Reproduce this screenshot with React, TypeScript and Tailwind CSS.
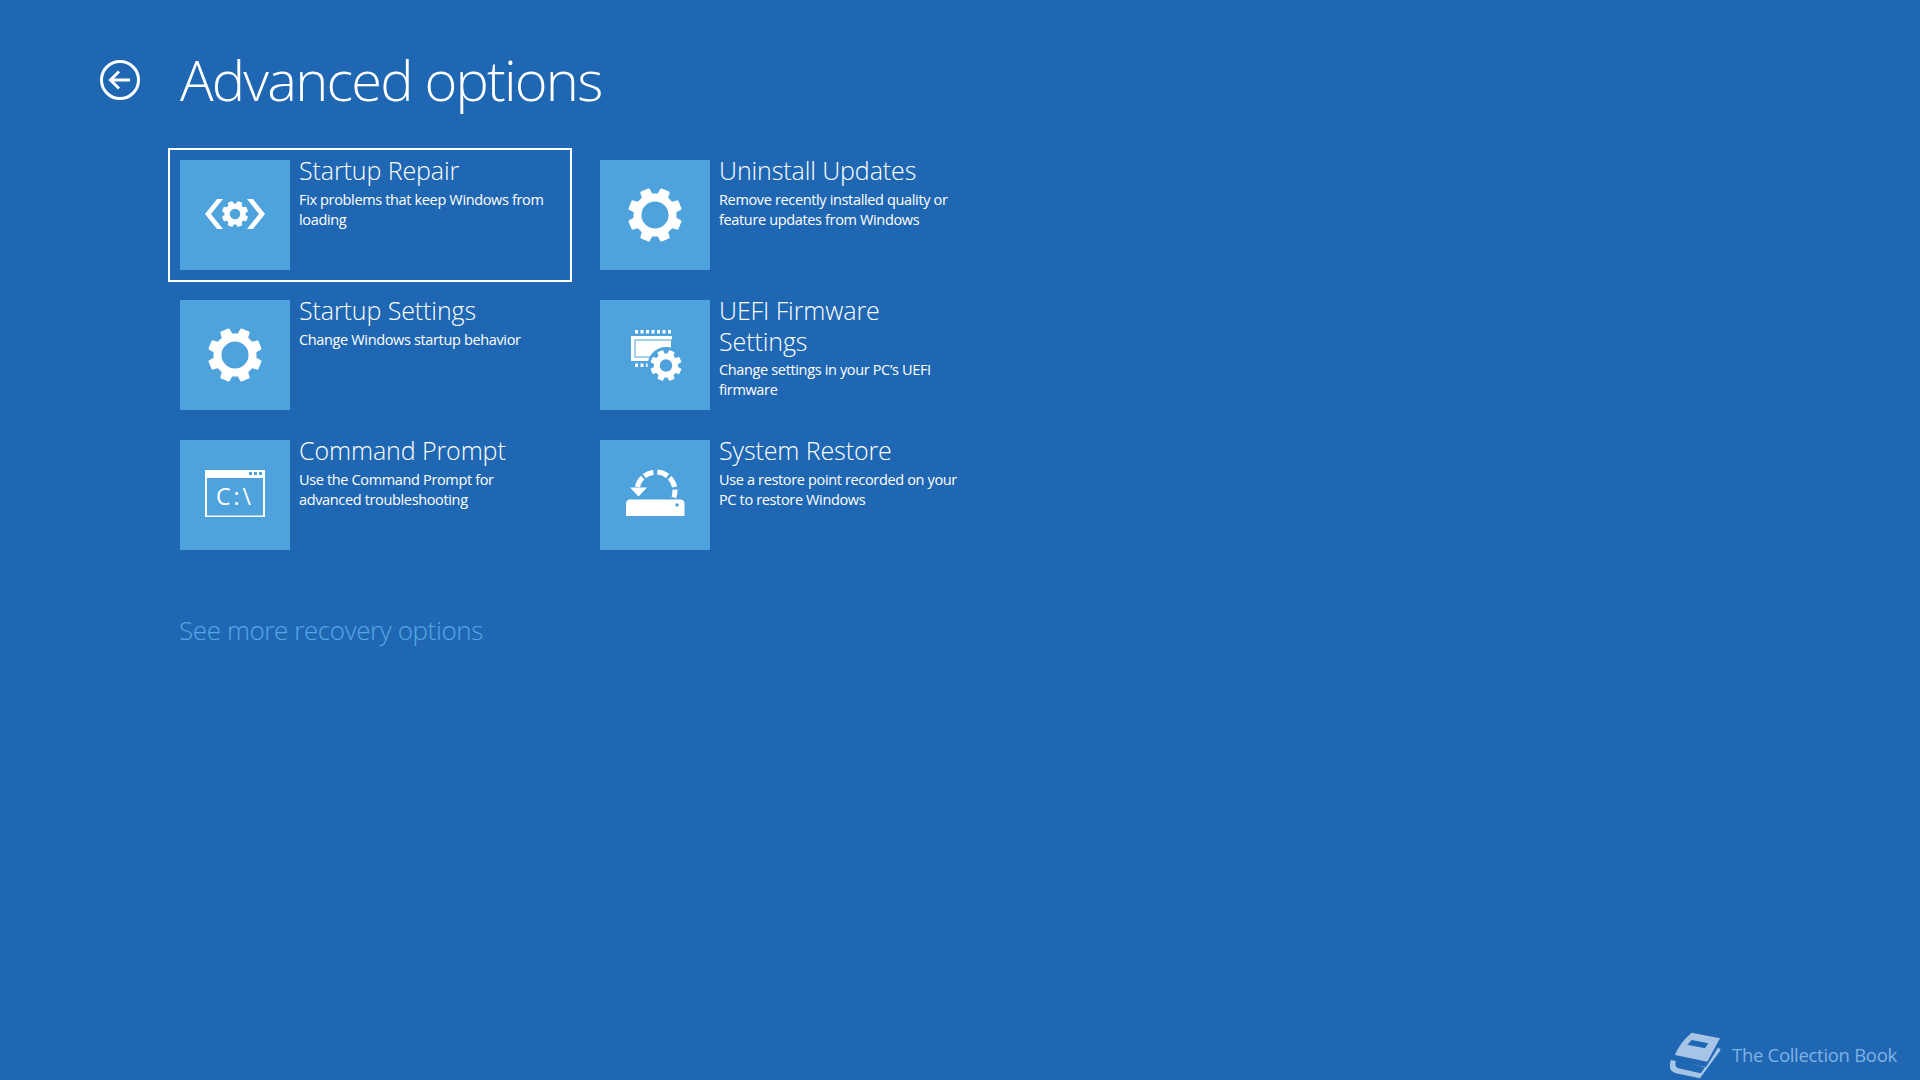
import type { ReactNode } from 'react'

// builds an n-tooth gear outline, centred on cx/cy
function gearPath(cx: number, cy: number, outer: number, root: number, hole: number, teeth = 8, start = 0) {
  const step = (Math.PI * 2) / teeth
  const pts: string[] = []
  for (let i = 0; i < teeth; i++) {
    const a = start + i * step
    const p = (r: number, t: number) => `${(cx + r * Math.cos(a + t)).toFixed(2)} ${(cy + r * Math.sin(a + t)).toFixed(2)}`
    pts.push(`${i === 0 ? 'M' : 'L'}${p(root, -step * 0.28)}`)
    pts.push(`L${p(outer, -step * 0.19)}`)
    pts.push(`L${p(outer, step * 0.19)}`)
    pts.push(`L${p(root, step * 0.28)}`)
  }
  pts.push('Z')
  return pts.join('') + `M${cx - hole} ${cy}a${hole} ${hole} 0 1 0 ${hole * 2} 0a${hole} ${hole} 0 1 0 ${-hole * 2} 0Z`
}

// degrees run clockwise from twelve o'clock
function arc(a0: number, a1: number) {
  const pt = (a: number) => {
    const r = (a * Math.PI) / 180
    return `${(56 + 19 * Math.sin(r)).toFixed(2)} ${(51 - 19 * Math.cos(r)).toFixed(2)}`
  }
  return `M${pt(a0)}A19 19 0 0 1 ${pt(a1)}`
}

function RepairIcon() {
  return (
    <svg viewBox="0 0 110 110" className="w-full h-full" fill="#fff">
      <path d={gearPath(55, 54, 12.500, 10, 6, 8, Math.PI / 8)} fillRule="evenodd" stroke="#fff" strokeWidth="1.500" strokeLinejoin="round" />
      <path d="M37 39h6L31 54l12 15h-6L25 54Z" />
      <path d="M73 39h-6l12 15-12 15h6L85 54Z" />
    </svg>
  )
}

function GearIcon() {
  return (
    <svg viewBox="0 0 110 110" className="w-full h-full" fill="#fff">
      <path d={gearPath(55, 55, 26, 20.500, 14.800, 8, Math.PI / 8)} fillRule="evenodd" stroke="#fff" strokeWidth="2.500" strokeLinejoin="round" />
    </svg>
  )
}

function FirmwareIcon() {
  const top = [35, 40.500, 46, 51.500, 57, 62.500, 68]
  return (
    <svg viewBox="0 0 110 110" className="w-full h-full" fill="#fff">
      {top.map((x) => (
        <rect key={x} x={x} y="30" width="3" height="3.500" />
      ))}
      {top.slice(0, 3).map((x) => (
        <rect key={x} x={x} y="63.500" width="3" height="3.500" />
      ))}
      <rect x="31" y="36" width="41" height="25" />
      <rect x="35" y="40" width="36.500" height="17" fill="none" stroke="#4fa3dc" strokeWidth="1" />
      <circle cx="66" cy="65.500" r="18.500" fill="#4fa3dc" />
      <path d={gearPath(66, 65.500, 15, 11.500, 7, 8, Math.PI / 8)} fillRule="evenodd" stroke="#fff" strokeWidth="1.500" strokeLinejoin="round" />
    </svg>
  )
}

function CommandIcon() {
  return (
    <svg viewBox="0 0 110 110" className="w-full h-full">
      <rect x="25" y="30" width="60" height="47" fill="#fff" />
      <rect x="27" y="38" width="56" height="37.500" fill="#4fa3dc" />
      <rect x="69" y="32" width="3" height="3" fill="#4fa3dc" />
      <rect x="74" y="32" width="3" height="3" fill="#4fa3dc" />
      <rect x="79" y="32" width="3" height="3" fill="#4fa3dc" />
    </svg>
  )
}

function RestoreIcon() {
  return (
    <svg viewBox="0 0 110 110" className="w-full h-full" fill="#fff">
      <path d="M29 59.500h52a4 4 0 0 1 3.500 4V76H26V63a4 4 0 0 1 3-3.500Z" />
      <circle cx="77" cy="65" r="1.800" fill="#4fa3dc" />
      <path d="M30 47.500h17L38.500 56.500Z" />
      <g fill="none" stroke="#fff" strokeWidth="5">
        <path d={arc(-78, -45)} />
        <path d={arc(-38, -8)} />
        <path d={arc(4, 38)} />
        <path d={arc(46, 78)} />
        <path d={arc(86, 110)} />
      </g>
    </svg>
  )
}

function BookIcon() {
  return (
    <svg viewBox="0 0 51 47" className="w-[51px] h-[47px]" fill="#a6c5e6">
      <path d="M21.700.7 50 6.300 37.300 29.700 5 23C8 15 14 7 21.700.7Z" />
      <path d="M48.300 15.300 50.700 18 30 46.300 5 41C1 39-.5 37 0 34.700c0-3 .3-5 .7-6.700L36 35Z" />
      <path d="M6.700 28 35 35.300 30.700 41.300 8.300 36.300C5 35 4.500 31 6.700 28Z" fill="#1f67b3" />
      <path d="M21.700 8 38.300 11.300 35 16.300 17.300 12.700Z" fill="#1f67b3" />
    </svg>
  )
}

type Option = {
  title: string
  text: string
  icon: ReactNode
  focused?: boolean
  tileLabel?: string
}

const options: Option[] = [
  { title: 'Startup Repair', text: 'Fix problems that keep Windows from loading', icon: <RepairIcon />, focused: true },
  { title: 'Uninstall Updates', text: 'Remove recently installed quality or feature updates from Windows', icon: <GearIcon /> },
  { title: 'Startup Settings', text: 'Change Windows startup behavior', icon: <GearIcon /> },
  { title: 'UEFI Firmware Settings', text: 'Change settings in your PC’s UEFI firmware', icon: <FirmwareIcon /> },
  { title: 'Command Prompt', text: 'Use the Command Prompt for advanced troubleshooting', icon: <CommandIcon />, tileLabel: 'C:\\' },
  { title: 'System Restore', text: 'Use a restore point recorded on your PC to restore Windows', icon: <RestoreIcon /> },
]

function OptionCard({ option }: { option: Option }) {
  return (
    <div className="relative flex gap-[9px] h-[110px]">
      {option.focused && (
        <div className="absolute -left-3 -top-3 w-[404px] h-[134px] border-2 border-white" />
      )}
      <div className="relative w-[110px] h-[110px] shrink-0 bg-[#4fa3dc]">
        {option.icon}
        {option.tileLabel && (
          <span className="absolute inset-0 flex items-center justify-center pt-[2px] text-[23px] leading-none text-white tracking-[3px] font-['Open_Sans',sans-serif]">
            {option.tileLabel}
          </span>
        )}
      </div>
      <div className="w-[250px] text-white">
        <h2 className="w-[240px] text-[25px] leading-[30.500px] font-light tracking-[-0.1px] -mt-[5px]">{option.title}</h2>
        <p className="text-[14.500px] leading-[20px] tracking-[-0.35px] mt-[4px]">{option.text}</p>
      </div>
    </div>
  )
}

export default function App() {
  return (
    <div className="relative w-[1920px] h-[1080px] overflow-hidden bg-[#1f67b3] font-['Open_Sans',sans-serif]">
      <header className="flex items-center h-[80px] mt-[40px] pl-[99px]">
        <svg viewBox="0 0 42 42" className="w-[42px] h-[42px]" fill="none" stroke="#fff" strokeWidth="3">
          <circle cx="21" cy="21" r="18.500" />
          <path d="M31 21H12M20 12.500 11.500 21l8.500 8.500" />
        </svg>
        <h1 className="ml-[39px] -mt-[2px] text-[56px] leading-[80px] font-light text-white tracking-[-1.800px]">Advanced options</h1>
      </header>

      <div className="grid grid-cols-[420px_420px] gap-y-[30px] ml-[180px] mt-[40px]">
        {options.map((option) => (
          <OptionCard key={option.title} option={option} />
        ))}
      </div>

      <p className="ml-[179px] mt-[62px] text-[26px] leading-[36px] font-light text-[#56a8e2] tracking-[-0.4px]">See more recovery options</p>

      <div className="absolute left-[1670px] bottom-0 flex items-start gap-[11px] h-[48px]">
        <BookIcon />
        <span className="text-[18.500px] leading-[36px] mt-[5px] text-[#7fb2e3] tracking-[-0.3px]">The Collection Book</span>
      </div>
    </div>
  )
}
